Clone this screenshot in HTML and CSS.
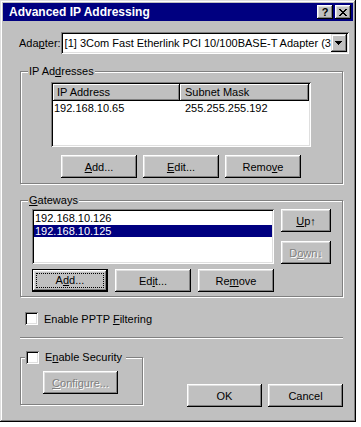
FILE: index.html
```html
<!DOCTYPE html>
<html lang="en">
<head>
    <meta charset="UTF-8">
    <title>Advanced IP Addressing</title>
    <link rel="stylesheet" href="styles.css">
</head>
<body>
    <div class="window">
        <div class="titlebar">
            <span class="title">Advanced IP Addressing</span>
            <span class="tbtn help">?</span>
            <span class="tbtn close">
                <svg width="8" height="7" viewBox="0 0 8 7" shape-rendering="crispEdges">
                    <path d="M0 0h2v1h-2z M6 0h2v1h-2z M1 1h2v1h-2z M5 1h2v1h-2z M2 2h4v1h-4z M3 3h2v1h-2z M2 4h4v1h-4z M1 5h2v1h-2z M5 5h2v1h-2z M0 6h2v1h-2z M6 6h2v1h-2z" fill="#000"/>
                </svg>
            </span>
        </div>

        <div class="content">
            <div class="adapter">
                <span class="adapter-label">Ada<u>p</u>ter:</span>
                <div class="combo">
                    <span class="combo-text">[1] 3Com Fast Etherlink PCI 10/100BASE-T Adapter (3</span>
                    <span class="combo-btn">
                        <svg width="7" height="4" viewBox="0 0 7 4" shape-rendering="crispEdges">
                            <path d="M0 0h7v1h-7z M1 1h5v1h-5z M2 2h3v1h-3z M3 3h1v1h-1z" fill="#000"/>
                        </svg>
                    </span>
                </div>
            </div>

            <div class="group group-ip">
                <span class="group-label">IP Ad<u>d</u>resses</span>
                <div class="listview">
                    <div class="lv-header">
                        <span class="lv-col lv-col1">IP Address</span>
                        <span class="lv-col lv-col2">Subnet Mask</span>
                    </div>
                    <div class="lv-row">
                        <span class="lv-cell1">192.168.10.65</span>
                        <span>255.255.255.192</span>
                    </div>
                </div>
                <div class="btn-row ip-btns">
                    <span class="btn"><u>A</u>dd...</span>
                    <span class="btn"><u>E</u>dit...</span>
                    <span class="btn">Remo<u>v</u>e</span>
                </div>
            </div>

            <div class="group group-gw">
                <span class="group-label"><u>G</u>ateways</span>
                <div class="gw-top">
                    <div class="gw-list">
                        <div class="gw-row">192.168.10.126</div>
                        <div class="gw-row selected">192.168.10.125</div>
                    </div>
                    <div class="gw-side">
                        <span class="btn btn-small"><u>U</u>p&#8593;</span>
                        <span class="btn btn-small disabled">D<u>o</u>wn&#8595;</span>
                    </div>
                </div>
                <div class="btn-row gw-btns">
                    <span class="btn btn-default"><span class="focus">A<u>d</u>d...</span></span>
                    <span class="btn">Ed<u>i</u>t...</span>
                    <span class="btn">Re<u>m</u>ove</span>
                </div>
            </div>

            <div class="check-row pptp">
                <span class="checkbox"></span>
                <span>Enable PPTP <u>F</u>iltering</span>
            </div>

            <div class="separator"></div>

            <div class="bottom">
                <div class="group group-sec">
                    <span class="group-label check-row">
                        <span class="checkbox"></span>
                        <span>E<u>n</u>able Security</span>
                    </span>
                    <span class="btn disabled"><u>C</u>onfigure...</span>
                </div>
                <div class="dlg-btns">
                    <span class="btn">OK</span>
                    <span class="btn">Cancel</span>
                </div>
            </div>
        </div>
    </div>
</body>
</html>
```

FILE: styles.css
```css
body {
    margin: 0;
    background: #ffffff;
    font-family: "Liberation Sans", Arial, sans-serif;
    font-size: 11px;
    color: #000000;
}
u {
    text-decoration-thickness: 1px;
    text-underline-offset: 1px;
}
.window {
    width: 356px;
    height: 422px;
    box-sizing: border-box;
    padding: 3px;
    background: #c0c0c0;
    box-shadow: inset -1px -1px #000000, inset 1px 1px #dfdfdf, inset -2px -2px #808080, inset 2px 2px #ffffff;
}
.titlebar {
    height: 18px;
    background: #000080;
    color: #ffffff;
    display: flex;
    align-items: center;
    padding: 0 2px 0 6px;
    font-weight: bold;
    font-size: 12px;
}
.title {
    flex: 1;
}
.tbtn {
    width: 16px;
    height: 14px;
    box-sizing: border-box;
    background: #c0c0c0;
    color: #000000;
    display: flex;
    align-items: center;
    justify-content: center;
    font-size: 11px;
    box-shadow: inset -1px -1px #000000, inset 1px 1px #ffffff, inset -2px -2px #808080, inset 2px 2px #dfdfdf;
}
.tbtn.close {
    margin-left: 2px;
}
.content {
    padding: 11px 10px 0 17px;
}
.adapter {
    display: flex;
    align-items: center;
    margin-left: -1px;
}
.adapter-label {
    width: 49px;
}
.combo {
    flex: 1;
    height: 22px;
    box-sizing: border-box;
    padding: 2px;
    background: #ffffff;
    display: flex;
    align-items: center;
    box-shadow: inset 1px 1px #808080, inset -1px -1px #ffffff, inset 2px 2px #000000, inset -2px -2px #dfdfdf;
}
.combo-text {
    flex: 1;
    overflow: hidden;
    white-space: nowrap;
    padding-left: 2px;
}
.combo-btn {
    width: 16px;
    height: 18px;
    box-sizing: border-box;
    background: #c0c0c0;
    display: flex;
    align-items: center;
    justify-content: center;
    box-shadow: inset -1px -1px #000000, inset 1px 1px #dfdfdf, inset -2px -2px #808080, inset 2px 2px #ffffff;
}
.group {
    position: relative;
    box-sizing: border-box;
    border: 1px solid #808080;
    box-shadow: inset 1px 1px #ffffff, 1px 1px #ffffff;
}
.group-label {
    position: absolute;
    top: -7px;
    left: 7px;
    padding: 0 1px;
    line-height: 13px;
    background: #c0c0c0;
}
.group-ip {
    margin-top: 17px;
    height: 113px;
    padding: 10px 0 0 30px;
}
.listview {
    width: 260px;
    height: 65px;
    box-sizing: border-box;
    padding: 2px;
    background: #ffffff;
    box-shadow: inset 1px 1px #808080, inset -1px -1px #ffffff, inset 2px 2px #000000, inset -2px -2px #dfdfdf;
}
.lv-header {
    display: flex;
    height: 17px;
}
.lv-col {
    box-sizing: border-box;
    background: #c0c0c0;
    line-height: 16px;
    box-shadow: inset -1px -1px #000000, inset 1px 1px #ffffff, inset -2px -2px #808080;
}
.lv-col1 {
    width: 127px;
    padding-left: 4px;
}
.lv-col2 {
    flex: 1;
    padding-left: 5px;
}
.lv-row {
    display: flex;
    line-height: 13px;
    margin-top: 1px;
    padding-left: 1px;
}
.lv-cell1 {
    width: 131px;
}
.btn-row {
    display: flex;
}
.btn {
    width: 76px;
    height: 23px;
    box-sizing: border-box;
    background: #c0c0c0;
    display: flex;
    align-items: center;
    justify-content: center;
    box-shadow: inset -1px -1px #000000, inset 1px 1px #ffffff, inset -2px -2px #808080, inset 2px 2px #dfdfdf;
}
.btn.disabled {
    color: #808080;
    text-shadow: 1px 1px #ffffff;
}
.ip-btns {
    margin: 8px 0 0 10px;
    gap: 6px;
}
.group-gw {
    margin-top: 16px;
    height: 97px;
    padding: 8px 0 0 11px;
}
.gw-top {
    display: flex;
}
.gw-list {
    width: 242px;
    height: 55px;
    box-sizing: border-box;
    padding: 2px;
    background: #ffffff;
    box-shadow: inset 1px 1px #808080, inset -1px -1px #ffffff, inset 2px 2px #000000, inset -2px -2px #dfdfdf;
}
.gw-row {
    line-height: 12px;
    height: 12px;
    padding-left: 1px;
    margin-top: 1px;
}
.gw-row.selected {
    background: #000080;
    color: #ffffff;
}
.gw-side {
    display: flex;
    flex-direction: column;
    gap: 9px;
    margin-left: 7px;
}
.btn-small {
    width: 50px;
}
.gw-btns {
    margin-top: 5px;
    gap: 7px;
}
.btn-default {
    box-shadow: inset 0 0 0 1px #000000, inset -2px -2px #000000, inset 2px 2px #ffffff, inset -3px -3px #808080, inset 3px 3px #dfdfdf;
}
.focus {
    border: 1px dotted #000000;
    width: 66px;
    height: 13px;
    line-height: 13px;
    text-align: center;
}
.check-row {
    display: flex;
    align-items: center;
}
.checkbox {
    width: 13px;
    height: 13px;
    box-sizing: border-box;
    background: #ffffff;
    margin-right: 6px;
    box-shadow: inset 1px 1px #808080, inset -1px -1px #ffffff, inset 2px 2px #000000, inset -2px -2px #dfdfdf;
}
.pptp {
    margin: 15px 0 0 5px;
}
.separator {
    margin-top: 12px;
    height: 1px;
    background: #808080;
    border-bottom: 1px solid #ffffff;
}
.bottom {
    display: flex;
    align-items: flex-start;
}
.group-sec {
    margin-top: 18px;
    width: 123px;
    height: 48px;
    padding: 13px 0 0 22px;
}
.group-sec .group-label {
    left: 4px;
    padding: 0 4px 0 1px;
}
.group-sec .btn {
    width: 75px;
}
.dlg-btns {
    display: flex;
    gap: 6px;
    margin: 45px 0 0 auto;
}
.dlg-btns .btn {
    width: 75px;
}
```
